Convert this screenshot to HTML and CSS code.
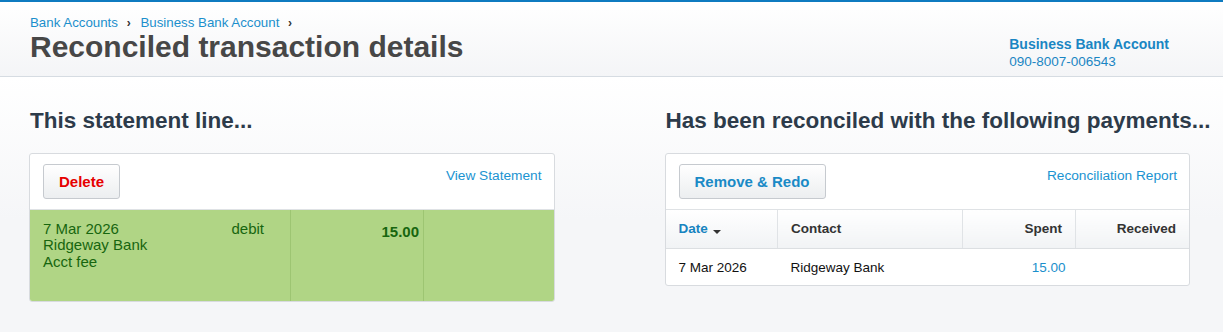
FILE: index.html
```html
<!DOCTYPE html>
<html>
<head>
    <title>Reconciled transaction details</title>
    <link rel="stylesheet" href="styles.css">
</head>
<body>
    <div class="header">
        <div class="header-left">
            <div class="breadcrumb">
                <a href="#">Bank Accounts</a>
                <span class="sep">&rsaquo;</span>
                <a href="#">Business Bank Account</a>
                <span class="sep">&rsaquo;</span>
            </div>
            <h1>Reconciled transaction details</h1>
        </div>
        <div class="account">
            <div class="account-name">Business Bank Account</div>
            <div class="account-number">090-8007-006543</div>
        </div>
    </div>

    <div class="main">
        <div class="column">
            <h2>This statement line...</h2>
            <div class="card">
                <div class="toolbar">
                    <button class="btn btn-delete">Delete</button>
                    <a class="link" href="#">View Statement</a>
                </div>
                <div class="statement-line">
                    <div class="line-details">
                        <div>
                            <div>7 Mar 2026</div>
                            <div>Ridgeway Bank</div>
                            <div>Acct fee</div>
                        </div>
                        <div>debit</div>
                    </div>
                    <div class="line-amount">15.00</div>
                    <div class="line-empty"></div>
                </div>
            </div>
        </div>

        <div class="column">
            <h2>Has been reconciled with the following payments...</h2>
            <div class="card">
                <div class="toolbar">
                    <button class="btn btn-redo">Remove &amp; Redo</button>
                    <a class="link" href="#">Reconciliation Report</a>
                </div>
                <table class="payments">
                    <colgroup>
                        <col class="col-date">
                        <col class="col-contact">
                        <col class="col-spent">
                        <col>
                    </colgroup>
                    <thead>
                        <tr>
                            <th class="sorted">Date<span class="sort-arrow"></span></th>
                            <th>Contact</th>
                            <th class="num">Spent</th>
                            <th class="num">Received</th>
                        </tr>
                    </thead>
                    <tbody>
                        <tr>
                            <td>7 Mar 2026</td>
                            <td>Ridgeway Bank</td>
                            <td class="num amount">15.00</td>
                            <td class="num"></td>
                        </tr>
                    </tbody>
                </table>
            </div>
        </div>
    </div>
</body>
</html>
```

FILE: styles.css
```css
body {
    font-family: "Liberation Sans", Arial, sans-serif;
    margin: 0;
    color: #333;
    background-color: #f5f6f8;
    background-image: linear-gradient(#ffffff 77px, #f5f6f8 220px);
    min-height: 100vh;
}

a {
    text-decoration: none;
}

.header {
    display: flex;
    justify-content: space-between;
    align-items: flex-start;
    height: 61px;
    border-top: 2px solid #0e7bc0;
    border-bottom: 1px solid #d6dce2;
    background: linear-gradient(#ffffff, #f4f5f7);
    padding: 13px 54px 0 30px;
}

.breadcrumb {
    font-size: 13.3px;
    line-height: 16px;
}

.breadcrumb a {
    color: #1b8fcc;
}

.breadcrumb .sep {
    margin: 0 6px 0 5px;
    color: #333;
    font-weight: bold;
    font-size: 12px;
}

h1 {
    margin: 0;
    font-size: 30px;
    line-height: 32px;
    color: #474747;
}

.account {
    margin-top: 21px;
    line-height: 17px;
    color: #1a86c3;
}

.account-name {
    font-size: 14px;
    font-weight: bold;
}

.account-number {
    font-size: 13.5px;
}

.main {
    display: grid;
    grid-template-columns: minmax(0, 1fr) minmax(0, 1fr);
    column-gap: 110px;
    padding: 31px 33px 0 29px;
}

h2 {
    margin: 0 0 19px;
    padding-left: 1px;
    font-size: 22.5px;
    line-height: 26px;
    color: #2d3b4a;
    white-space: nowrap;
}

.card {
    background-color: #fff;
    border: 1px solid #d8dbdf;
    border-radius: 3px;
    overflow: hidden;
}

.toolbar {
    display: flex;
    justify-content: space-between;
    align-items: flex-start;
    padding: 10px 12px 10px 13px;
    border-bottom: 1px solid #dfe2e5;
}

.btn {
    height: 35px;
    padding: 0 15px;
    font-family: inherit;
    font-size: 15px;
    font-weight: bold;
    background: linear-gradient(#ffffff, #eceef0);
    border: 1px solid #c6cacf;
    border-radius: 3px;
    cursor: pointer;
}

.btn-delete {
    color: #e60000;
}

.btn-redo {
    color: #1a8ac6;
}

.link {
    padding-top: 4px;
    font-size: 13.7px;
    line-height: 16px;
    color: #1b93d1;
}

.statement-line {
    display: grid;
    grid-template-columns: 261px 133px 1fr;
    height: 91px;
    background-color: #b0d585;
    color: #17660f;
    font-size: 15px;
    line-height: 16.3px;
}

.line-details {
    display: flex;
    justify-content: space-between;
    padding: 11px 26px 0 13px;
    border-right: 1px solid #9dc572;
}

.line-amount {
    padding: 14px 4px 0 0;
    text-align: right;
    font-weight: bold;
    border-right: 1px solid #9dc572;
}

.payments {
    width: 100%;
    border-collapse: collapse;
    table-layout: fixed;
    font-size: 13.5px;
}

.col-date {
    width: 112px;
}

.col-contact {
    width: 185px;
}

.col-spent {
    width: 113px;
}

.payments th {
    height: 36px;
    padding: 0 13px 2px;
    text-align: left;
    color: #333;
    background: linear-gradient(#ffffff, #f1f3f5);
    border-bottom: 1px solid #dcdfe2;
    border-left: 1px solid #e0e3e6;
}

.payments th:first-child {
    border-left: none;
}

.payments th.sorted {
    color: #1784c0;
}

.sort-arrow {
    display: inline-block;
    margin-left: 5px;
    vertical-align: -1px;
    border-top: 4px solid #333;
    border-left: 4px solid transparent;
    border-right: 4px solid transparent;
}

.payments td {
    height: 36px;
    padding: 0 10px 0 13px;
    color: #111;
}

.payments .num {
    text-align: right;
}

.payments td.amount {
    color: #1b8fcc;
}
```
